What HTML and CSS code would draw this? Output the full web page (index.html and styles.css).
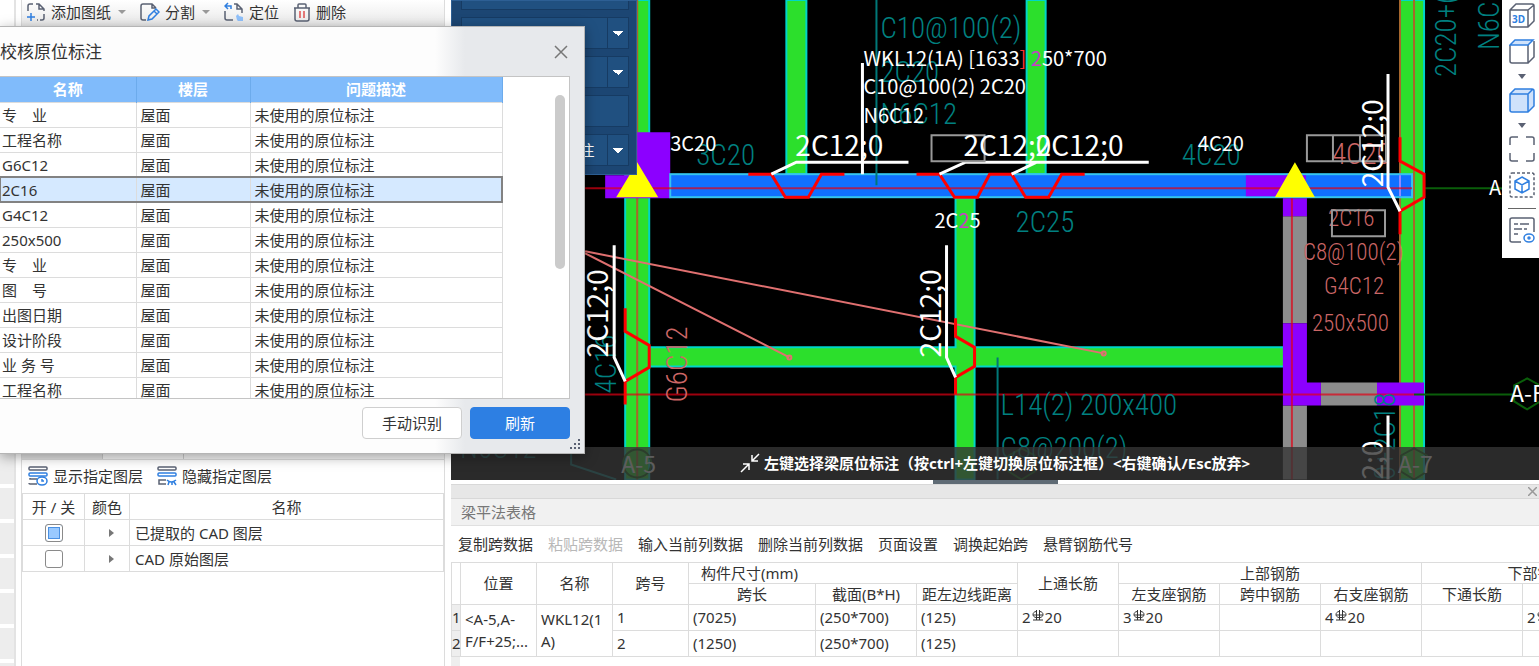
FILE: index.html
```html
<!DOCTYPE html>
<html lang="zh-CN">
<head>
    <meta charset="UTF-8">
    <meta name="viewport" content="width=device-width, initial-scale=1.0">
    <title>校核原位标注</title>
    <link rel="stylesheet" href="styles.css">
</head>
<body>
    <div class="app">
        <div class="strip">
            <div class="strip-top"></div>
            <div class="strip-cell"></div>
            <div class="strip-cell"></div>
            <div class="strip-cell"></div>
            <div class="strip-cell"></div>
            <div class="strip-cell"></div>
            <div class="strip-cell"></div>
            <div class="strip-cell"></div>
        </div>

        <aside class="side">
            <div class="side-tools">
                <button class="tool with-arrow">
                    <svg width="20" height="20" viewBox="0 0 20 20" fill="none" stroke="#5a6173" stroke-width="1.5"><path d="M2 9V4a2 2 0 0 1 2-2h3M10 2h3l5 5v2M13 2v5h5M18 12v4a2 2 0 0 1-2 2h-2M11 18h1"/><path d="M5 11v8M1 15h8" stroke="#2f7fe0"/></svg>
                    添加图纸
                </button>
                <button class="tool with-arrow">
                    <svg width="20" height="20" viewBox="0 0 20 20" fill="none" stroke="#5a6173" stroke-width="1.5"><path d="M6 18H3a2 2 0 0 1-2-2V4a2 2 0 0 1 2-2h9l4 4M12 2v4h4"/><path d="M8 18l1-4 7-7 3 3-7 7zM14 9l3 3" stroke="#2f7fe0"/></svg>
                    分割
                </button>
                <button class="tool">
                    <svg width="20" height="20" viewBox="0 0 20 20" fill="none" stroke="#5a6173" stroke-width="1.5"><path d="M1 9v7a2 2 0 0 0 2 2h6M10 2h3l5 5v4M13 2v5h5"/><path d="M7 7V4H2M4 1L1 4l3 3" stroke="#2f7fe0"/><path d="M13 18l-1-4 2-2 1 2 4 1v4h-5z" fill="#8fc0fa" stroke="none"/></svg>
                    定位
                </button>
                <button class="tool">
                    <svg width="18" height="20" viewBox="0 0 18 20" fill="none" stroke="#5a6173" stroke-width="1.5"><path d="M1 6h16M5 6V3a1 1 0 0 1 1-1h6a1 1 0 0 1 1 1v3M2 6v11a2 2 0 0 0 2 2h10a2 2 0 0 0 2-2V6"/><path d="M7 9v7M11 9v7" stroke="#e05050"/></svg>
                    删除
                </button>
            </div>

            <div class="layers">
                <div class="layer-tabs"><span class="on"></span><span></span></div>
                <div class="layer-tools">
                    <button class="tool">
                        <svg width="20" height="20" viewBox="0 0 20 20" fill="none" stroke="#5a6173" stroke-width="1.5"><rect x="1" y="1" width="18" height="3" rx="1"/><path d="M9 13H2v-1M9 18H2a1 1 0 0 1-1-1"/><rect x="1" y="7" width="18" height="3" rx="1" stroke="#2f7fe0"/><ellipse cx="14" cy="15" rx="5" ry="4" stroke="#2f7fe0"/><path d="M14 13v2h2" stroke="#2f7fe0"/></svg>
                        显示指定图层
                    </button>
                    <button class="tool">
                        <svg width="20" height="20" viewBox="0 0 20 20" fill="none" stroke="#5a6173" stroke-width="1.5"><rect x="1" y="1" width="18" height="3" rx="1"/><path d="M9 14H2v4h7"/><rect x="1" y="7" width="18" height="3" rx="1" stroke="#2f7fe0"/><path d="M10 14q4 4 9 0M11 19l1-3M15 19v-3M19 19l-2-3" stroke="#2f7fe0"/></svg>
                        隐藏指定图层
                    </button>
                </div>
                <table class="layer-table">
                    <colgroup><col class="c-on"><col class="c-color"><col></colgroup>
                    <thead>
                        <tr><th>开 / 关</th><th>颜色</th><th>名称</th></tr>
                    </thead>
                    <tbody>
                        <tr>
                            <td class="mid"><input type="checkbox" id="layer1" checked></td>
                            <td class="mid"><span class="expand"></span></td>
                            <td><label for="layer1">已提取的 CAD 图层</label></td>
                        </tr>
                        <tr>
                            <td class="mid"><input type="checkbox" id="layer2"></td>
                            <td class="mid"><span class="expand"></span></td>
                            <td><label for="layer2">CAD 原始图层</label></td>
                        </tr>
                    </tbody>
                </table>
            </div>
        </aside>

        <main class="work">
            <section class="cad">
                <svg class="drawing" viewBox="451 0 1088 479" preserveAspectRatio="xMinYMin slice">
                    <!-- green beams -->
                    <g class="beam">
                        <path d="M625 0h24v479h-24zM786 0h20v174h-20zM1026 0h19v174h-19z"/>
                        <path d="M1399 0h24v479h-24z"/>
                        <path d="M649 347H955V198h19V347H1283V366H974V479H955V366H649z"/>
                    </g>
                    <path class="axis-v" d="M637 0V479M1413 0V479M1399 0V479"/>

                    <!-- columns and walls -->
                    <path class="wall" d="M1282 216h24v107h-24zM1282 405h24v74h-24zM1320 382h56v23h-56z"/>
                    <path class="column" d="M637 132h33v66h-65v-23h32zM1282 198h24v18h-24zM1282 323h24v59h14v23h-38zM1376 382h47v23h-47z"/>

                    <!-- selected beam -->
                    <rect class="selected" x="670" y="174" width="741" height="23"/>
                    <path class="column" d="M1245 175h60v21h-60z"/>
                    <path class="edge" d="M1399 175v21"/>

                    <!-- axis lines -->
                    <path class="axis" d="M585 188H1411M1291 198V479M585 394H1413"/>
                    <path class="axis-g" d="M1423 188H1502M1413 394H1512"/>
                    <path class="yellow" d="M637 162l21 35h-42zM1294 162l20 35h-40z"/>
                    <path class="hexagon" d="M1526 378l13 7v16l-13 8-13-8v-16zM1413 448l13 7v16l-13 8-13-8v-16zM1021 448l13 7v16l-13 8-13-8v-16z"/>
                    <circle class="hexagon" cx="637" cy="463" r="14"/>

                    <!-- original CAD texts -->
                    <path class="teal-line" d="M876 0V185M997 357V479M571 440V464L616 479"/>
                    <g class="cad-text teal">
                        <text x="880" y="38">C10@100(2)</text>
                        <text x="880" y="82">2C20</text>
                        <text x="880" y="124">N6C12</text>
                        <text x="696" y="165">3C20</text>
                        <text x="1181" y="165">4C20</text>
                        <text x="1015" y="232">2C25</text>
                        <text x="1000" y="415">L14(2) 200x400</text>
                        <text x="1000" y="458">C8@200(2)</text>
                        <text x="1000" y="500">2C18;2C20</text>
                        <text x="460" y="458">N6C12</text>
                        <text transform="translate(1455 77) rotate(-90)">2C20+(2C12)</text>
                        <text transform="translate(1498 50) rotate(-90)">N6C12</text>
                        <text transform="translate(616 393) rotate(-90)">4C16</text>
                        <text transform="translate(1394 524) rotate(-90)">2C20+2C18</text>
                    </g>
                    <g class="cad-text salmon">
                        <text transform="translate(687 402) rotate(-90)">G6C12</text>
                        <text x="1331" y="164">4C20</text>
                    </g>
                    <g class="cad-text salmon small">
                        <text x="1327" y="226">2C16</text>
                        <text x="1302" y="260">C8@100(2)</text>
                        <text x="1323" y="294">G4C12</text>
                        <text x="1311" y="331">250x500</text>
                    </g>
                    <path class="salmon-line" d="M585 251L1103 353M585 253L789 357"/>
                    <circle class="salmon-line" cx="789" cy="357" r="2"/>
                    <circle class="salmon-line" cx="1103" cy="353" r="2"/>

                    <!-- hanging bars -->
                    <g class="tie">
                        <path d="M748 174H771L785 197H808L821 174H844"/>
                        <path d="M916 174H939L954 197H977L989 174H1011L1025 197H1048L1061 174H1084"/>
                        <path d="M625 308V331L649 345V367L625 381V404"/>
                        <path d="M955 318V336L974 347V366L955 377V394"/>
                        <path d="M1399 137V161L1423 174V197L1399 211V234"/>
                    </g>

                    <!-- leaders -->
                    <g class="leader">
                        <path d="M771 174L796 162H908M939 174L965 162H1148M1011 174L1036 162M862 63V174"/>
                        <path d="M614 245V357L625 381M946 245V357L955 377M1387 74V187L1399 211M1387 415V479"/>
                    </g>
                    <path class="box" d="M931 135h53v26h-53zM1306 135h53v26h-53zM1332 135h53v26h-53zM1331 210h53v26h-53z"/>

                    <!-- live labels -->
                    <g class="label">
                        <text x="863" y="66">WKL12(1A) [1633<tspan class="red">]</tspan> <tspan class="magenta">2</tspan>50*700</text>
                        <text x="863" y="94">C10@100(2) 2C20</text>
                        <text x="863" y="123">N6C12</text>
                        <text x="670" y="151">3C20</text>
                        <text x="1197" y="151">4C20</text>
                        <text x="934" y="228">2C<tspan class="magenta">2</tspan>5</text>
                        <text x="1488" y="195">A-G</text>
                    </g>
                    <g class="label big">
                        <text x="795" y="156">2C12;0</text>
                        <text x="963" y="156">2C12;0</text>
                        <text x="1035" y="156">2C12;0</text>
                        <text transform="translate(608 357) rotate(-90)">2C12;0</text>
                        <text transform="translate(940 357) rotate(-90)">2C12;0</text>
                        <text transform="translate(1382 187) rotate(-90)">2C12;0</text>
                        <text transform="translate(1382 528) rotate(-90)">2C12;0</text>
                    </g>
                    <g class="label axis-name">
                        <text x="1509" y="402">A-F</text>
                        <text x="621" y="472">A-5</text>
                        <text x="1397" y="472">A-7</text>
                    </g>
                </svg>

                <div class="menu">
                    <button class="menu-item"></button>
                    <button class="menu-item split"><span>点选识别梁</span></button>
                    <button class="menu-item split"><span></span></button>
                    <button class="menu-item"></button>
                    <button class="menu-item split"><span>点选识别原位标注</span></button>
                </div>

                <div class="hint">
                    <svg width="20" height="20" viewBox="0 0 20 20" fill="none" stroke="#fff" stroke-width="1.5"><path d="M19 1l-7 7M12 2v6h6M1 19l8-8M3 11h6v6"/></svg>
                    <span>左键选择梁原位标注（按ctrl+左键切换原位标注框）&lt;右键确认/Esc放弃&gt;</span>
                </div>

                <div class="views">
                    <button aria-label="3D"><svg width="26" height="26" viewBox="0 0 26 26" fill="none" stroke="#5a6173" stroke-width="1.5"><path d="M1 8l6-6h16a2 2 0 0 1 2 2v15l-6 6H3a2 2 0 0 1-2-2zM1 8h18v17M19 8l6-5"/><text x="3" y="21" class="label-3d">3D</text></svg></button>
                    <button aria-label="俯视"><svg width="26" height="26" viewBox="0 0 26 26" fill="none" stroke="#5a6173" stroke-width="1.5"><path d="M1 7v16a2 2 0 0 0 2 2h16V7M19 25l6-6V3"/><path d="M1 7l5-5h18l-5 5z" fill="#cfe2fb" stroke="#2f7fe0"/></svg></button>
                    <span class="drop"></span>
                    <button aria-label="实体"><svg width="26" height="26" viewBox="0 0 26 26" fill="#cfe2fb" stroke="#2f7fe0" stroke-width="1.5"><path d="M1 7l5-5h17a2 2 0 0 1 2 2v15l-6 6H3a2 2 0 0 1-2-2zM1 7h18v18M19 7l5-5"/></svg></button>
                    <span class="drop"></span>
                    <button aria-label="全屏"><svg width="26" height="26" viewBox="0 0 26 26" fill="none" stroke="#5a6173" stroke-width="1.5"><path d="M1 9V3a2 2 0 0 1 2-2h6M17 1h6a2 2 0 0 1 2 2v6M25 17v6a2 2 0 0 1-2 2h-6M9 25H3a2 2 0 0 1-2-2v-6"/></svg></button>
                    <button aria-label="动态观察"><svg width="26" height="26" viewBox="0 0 26 26" fill="none" stroke="#2f7fe0" stroke-width="1.5"><rect x="1" y="1" width="24" height="24" rx="2" stroke="#5a6173" stroke-dasharray="3 2"/><path d="M13 5l7 4v8l-7 4-7-4V9zM6 9l7 4 7-4M13 13v8"/></svg></button>
                    <hr>
                    <button aria-label="显示设置"><svg width="26" height="26" viewBox="0 0 26 26" fill="none" stroke="#5a6173" stroke-width="1.5"><path d="M12 25H3a2 2 0 0 1-2-2V3a2 2 0 0 1 2-2h20a2 2 0 0 1 2 2v12M5 7h4M11 7h9M5 12h8M15 12h3M5 17h4"/><ellipse cx="20" cy="21" rx="5" ry="4" stroke="#2f7fe0"/><circle cx="20" cy="21" r="1" stroke="#2f7fe0"/></svg></button>
                </div>
            </section>

            <div class="splitter"><button class="handle" aria-label="收起"></button></div>

            <section class="beam-panel">
                <div class="panel-bar"><button class="panel-close" aria-label="关闭"><svg width="9" height="9" viewBox="0 0 9 9" stroke="#999" stroke-width="1.5"><path d="M0 0l9 9M9 0L0 9"/></svg></button></div>
                <div class="panel-title">梁平法表格</div>
                <div class="panel-tools">
                    <button>复制跨数据</button>
                    <button disabled>粘贴跨数据</button>
                    <button>输入当前列数据</button>
                    <button>删除当前列数据</button>
                    <button>页面设置</button>
                    <button>调换起始跨</button>
                    <button>悬臂钢筋代号</button>
                </div>
                <div class="beam-scroll">
                    <table class="beam-table">
                        <colgroup>
                            <col class="w-no"><col class="w-s"><col class="w-s"><col class="w-s">
                            <col class="w-l"><col class="w-m"><col class="w-m"><col class="w-m">
                            <col class="w-m"><col class="w-m"><col class="w-m"><col class="w-m"><col class="w-end">
                        </colgroup>
                        <thead>
                            <tr>
                                <th rowspan="2"></th>
                                <th rowspan="2">位置</th>
                                <th rowspan="2">名称</th>
                                <th rowspan="2">跨号</th>
                                <th colspan="3" class="start">构件尺寸(mm)</th>
                                <th rowspan="2">上通长筋</th>
                                <th colspan="3">上部钢筋</th>
                                <th colspan="2">下部钢筋</th>
                            </tr>
                            <tr>
                                <th>跨长</th><th>截面(B*H)</th><th>距左边线距离</th>
                                <th>左支座钢筋</th><th>跨中钢筋</th><th>右支座钢筋</th>
                                <th>下通长筋</th><th>下部钢筋</th>
                            </tr>
                        </thead>
                        <tbody>
                            <tr>
                                <td class="no">1</td>
                                <td rowspan="2" class="wrap">&lt;A-5,A-<br>F/F+25;...</td>
                                <td rowspan="2" class="wrap">WKL12(1<br>A)</td>
                                <td>1</td><td>(7025)</td><td>(250*700)</td><td>(125)</td>
                                <td>2<svg class="bar-mark" viewBox="0 0 12 12"><use href="#rebar"/></svg>20</td>
                                <td>3<svg class="bar-mark" viewBox="0 0 12 12"><use href="#rebar"/></svg>20</td>
                                <td></td>
                                <td>4<svg class="bar-mark" viewBox="0 0 12 12"><use href="#rebar"/></svg>20</td>
                                <td></td>
                                <td>2<svg class="bar-mark" viewBox="0 0 12 12"><use href="#rebar"/></svg>25</td>
                            </tr>
                            <tr>
                                <td class="no">2</td>
                                <td>2</td><td>(1250)</td><td>(250*700)</td><td>(125)</td>
                                <td></td><td></td><td></td><td></td><td></td><td></td>
                            </tr>
                        </tbody>
                    </table>
                    <div class="no-fill"></div>
                </div>
            </section>
        </main>
    </div>

    <div class="dialog" role="dialog" aria-labelledby="dialog-title">
        <div class="dialog-head">
            <h1 id="dialog-title">校核原位标注</h1>
            <button class="close" aria-label="关闭"><svg width="14" height="14" viewBox="0 0 14 14" stroke="#777" stroke-width="1.5"><path d="M1 1l12 12M13 1L1 13"/></svg></button>
        </div>
        <div class="list">
            <table class="check-table">
                <colgroup><col class="c-name"><col class="c-floor"><col class="c-desc"></colgroup>
                <thead>
                    <tr><th>名称</th><th>楼层</th><th>问题描述</th></tr>
                </thead>
                <tbody>
                    <tr><td>专&emsp;业</td><td>屋面</td><td>未使用的原位标注</td></tr>
                    <tr><td>工程名称</td><td>屋面</td><td>未使用的原位标注</td></tr>
                    <tr><td>G6C12</td><td>屋面</td><td>未使用的原位标注</td></tr>
                    <tr class="current"><td>2C16</td><td>屋面</td><td>未使用的原位标注</td></tr>
                    <tr><td>G4C12</td><td>屋面</td><td>未使用的原位标注</td></tr>
                    <tr><td>250x500</td><td>屋面</td><td>未使用的原位标注</td></tr>
                    <tr><td>专&emsp;业</td><td>屋面</td><td>未使用的原位标注</td></tr>
                    <tr><td>图&emsp;号</td><td>屋面</td><td>未使用的原位标注</td></tr>
                    <tr><td>出图日期</td><td>屋面</td><td>未使用的原位标注</td></tr>
                    <tr><td>设计阶段</td><td>屋面</td><td>未使用的原位标注</td></tr>
                    <tr><td>业 务 号</td><td>屋面</td><td>未使用的原位标注</td></tr>
                    <tr><td>工程名称</td><td>屋面</td><td>未使用的原位标注</td></tr>
                </tbody>
            </table>
            <div class="scroll"><span></span></div>
        </div>
        <div class="dialog-foot">
            <button class="btn">手动识别</button>
            <button class="btn primary">刷新</button>
        </div>
        <svg class="grip" width="11" height="11" viewBox="0 0 11 11" fill="#5a6173"><path d="M8 0h2v2h-2zM4 4h2v2h-2zM8 4h2v2h-2zM0 8h2v2h-2zM4 8h2v2h-2zM8 8h2v2h-2z"/></svg>
    </div>

    <svg width="0" height="0" class="defs">
        <symbol id="rebar" viewBox="0 0 12 12"><path d="M4.500 0v10M7.500 0v10M1 10h10M1 5h10M4 1.500C0 2 0 7 4 7.500h4C12 7 12 2 8 1.500" fill="none" stroke="#333"/></symbol>
    </svg>
</body>
</html>
```
FILE: styles.css
```css
* {
    box-sizing: border-box;
}
body {
    margin: 0;
    height: 100vh;
    overflow: hidden;
    background: #fff;
    color: #333;
    font: 15px/20px "Noto Sans", "Noto Sans CJK SC", sans-serif;
}
button {
    padding: 0;
    border: none;
    background: none;
    color: inherit;
    font: inherit;
    white-space: nowrap;
}
table {
    border-collapse: collapse;
    table-layout: fixed;
}
.defs {
    position: absolute;
}
.app {
    display: flex;
    height: 100%;
}

/* left edge */
.strip {
    flex: 0 0 16px;
    display: flex;
    flex-direction: column;
    gap: 4px;
    border-right: 2px solid #e3e3e3;
    overflow: hidden;
}
.strip-top {
    flex: 0 0 449px;
}
.strip-cell {
    flex: 0 0 31px;
    background: #ededed;
}

/* layer panel */
.side {
    flex: 0 0 424px;
    margin-left: 5px;
    display: flex;
    flex-direction: column;
    border: solid #dcdcdc;
    border-width: 0 1px;
}
.side-tools {
    height: 40px;
    display: flex;
    align-items: flex-start;
    gap: 14px;
    padding: 2px 4px;
    background: linear-gradient(#fff, #e8e8e8 26px);
}
.tool {
    display: flex;
    align-items: center;
    gap: 5px;
    height: 20px;
}
.with-arrow::after {
    content: "";
    margin-left: 2px;
    border: 4px solid transparent;
    border-top-color: #999;
    border-bottom: none;
}
.layers {
    margin-top: 414px;
}
.layer-tabs {
    display: flex;
    height: 6px;
    border-bottom: 1px solid #dcdcdc;
    background: #f5f5f5;
}
.layer-tabs span {
    width: 81px;
    border-right: 1px solid #ccc;
}
.layer-tabs .on {
    background: #e2e2e2;
}
.layer-tools {
    display: flex;
    align-items: center;
    gap: 14px;
    height: 33px;
    padding: 0 6px 2px;
}
.layer-table {
    width: 100%;
}
.layer-table th,
.layer-table td {
    height: 26px;
    padding: 0 5px;
    border: 1px solid #dcdcdc;
    font-weight: normal;
}
.layer-table .mid {
    text-align: center;
}
.c-on {
    width: 62px;
}
.c-color {
    width: 45px;
}
.layer-table input {
    appearance: none;
    display: block;
    width: 18px;
    height: 18px;
    margin: 0 auto;
    padding: 2px;
    border: 1px solid #8a8a8a;
    border-radius: 3px;
}
.layer-table input:checked {
    background: #99c9ff content-box;
    box-shadow: inset 0 0 0 2px #fff, inset 0 0 0 3px #4a90e2;
}
.expand {
    display: inline-block;
    margin-left: 8px;
    border: 4px solid transparent;
    border-left: 5px solid #777;
    border-right: none;
    vertical-align: 2px;
}

/* work area */
.work {
    flex: 1;
    min-width: 0;
    margin-left: 6px;
    display: flex;
    flex-direction: column;
}
.cad {
    position: relative;
    height: 72vh;
    background: #000;
    overflow: hidden;
}
.drawing {
    display: block;
    width: 100%;
    height: 100%;
    fill: none;
}
.beam {
    fill: #2cdf2c;
    stroke: #00d5c8;
    stroke-width: 2;
}
.axis-v {
    stroke: #a8662c;
    stroke-width: 2;
}
.wall {
    fill: #8c8c8c;
}
.column {
    fill: #8c00ff;
}
.selected {
    fill: #1070ff;
    stroke: #35c5ee;
    stroke-width: 2;
}
.edge {
    stroke: #8f8bff;
    stroke-width: 2;
}
.axis {
    stroke: rgba(225, 0, 20, 0.7);
    stroke-width: 2;
}
.axis-g,
.hexagon {
    stroke: #0a5e0a;
    stroke-width: 2;
}
.yellow {
    fill: #ff0;
}
.cad-text {
    font: 300 29px "Roboto Condensed", "Liberation Sans Narrow", sans-serif;
}
.cad-text.small {
    font-size: 23px;
}
.teal {
    fill: #008080;
}
.salmon {
    fill: #cc6666;
}
.teal-line {
    stroke: #007878;
    stroke-width: 2;
}
.salmon-line {
    stroke: #e07070;
    stroke-width: 2;
}
.tie {
    stroke: #f00;
    stroke-width: 3;
}
.leader {
    stroke: #fff;
    stroke-width: 3;
}
.box {
    stroke: #999;
    stroke-width: 2;
}
.label {
    fill: #fff;
    font: 20px "Noto Sans CJK SC", sans-serif;
}
.label.big {
    font-size: 28px;
}
.label.axis-name {
    font-size: 23px;
}
.magenta {
    fill: #c83cc8;
}
.red {
    fill: #f33;
}

.menu {
    position: absolute;
    left: 0;
    top: 0;
    width: 186px;
    height: 175px;
    display: flex;
    flex-direction: column;
    justify-content: flex-end;
    gap: 7px;
    padding: 8px 7px 8px 9px;
    border: 1px solid #2d5f94;
    background: #1c4673;
    overflow: hidden;
}
.menu-item {
    flex: 0 0 32px;
    border: 1px solid #163b63;
    background: #205080;
    color: #fff;
}
.menu-item.split {
    display: flex;
    align-items: center;
}
.split span {
    flex: 1;
}
.split::after {
    content: "";
    width: 20px;
    height: 30px;
    border-left: 1px solid #163b63;
    background: conic-gradient(from -45deg at 50% 100%, #fff 90deg, transparent 0) 50% 50% / 10px 5px no-repeat;
}
.hint {
    position: absolute;
    left: 0;
    right: 0;
    bottom: 0;
    height: 33px;
    display: flex;
    align-items: center;
    justify-content: center;
    gap: 4px;
    background: rgba(52, 52, 52, 0.8);
    color: #fff;
    font-weight: bold;
}
.views {
    position: absolute;
    right: 0;
    top: 0;
    width: 37px;
    height: 258px;
    display: flex;
    flex-direction: column;
    align-items: center;
    padding: 2px 3px 2px 6px;
    background: #fff;
}
.views button {
    height: 26px;
    margin-bottom: 10px;
}
.views svg {
    display: block;
}
.drop {
    margin-bottom: 8px;
    border: 4px solid transparent;
    border-top: 5px solid #5a6173;
    border-bottom: none;
}
.views hr {
    width: 100%;
    margin: 0 0 8px;
    border: none;
    border-top: 1px solid #666;
}
.label-3d {
    fill: #2f7fe0;
    stroke: none;
    font: bold 10px "Noto Sans", sans-serif;
}
.splitter {
    flex: 0 0 4px;
    display: flex;
    justify-content: center;
}
.handle {
    width: 125px;
    background: #5f6b75;
}

/* beam table panel */
.beam-panel {
    flex: 1;
    display: flex;
    flex-direction: column;
    overflow: hidden;
}
.panel-bar {
    flex: 0 0 15px;
    display: flex;
    justify-content: flex-end;
    align-items: center;
    padding-right: 2px;
    border: solid #d8d8d8;
    border-width: 1px 0;
    background: #e7e7e7;
}
.panel-close svg {
    display: block;
}
.panel-title {
    flex: 0 0 27px;
    padding: 3px 10px;
    border-bottom: 1px solid #e0e0e0;
    background: #f1f1f1;
    color: #777;
}
.panel-tools {
    flex: 0 0 36px;
    display: flex;
    align-items: center;
    gap: 15px;
    padding: 0 7px;
}
.panel-tools button:disabled {
    color: #b8b8b8;
}
.beam-scroll {
    flex: 1;
    display: flex;
    flex-direction: column;
    overflow: hidden;
}
.beam-table {
    width: 1203px;
}
.w-no {
    width: 9px;
}
.w-s {
    width: 76px;
}
.w-m {
    width: 101px;
}
.w-l {
    width: 127px;
}
.w-end {
    width: 131px;
}
.beam-table th,
.beam-table td {
    padding: 0 4px;
    border: 1px solid #dcdcdc;
    text-align: left;
    font-weight: normal;
    white-space: nowrap;
}
.beam-table th {
    height: 21px;
    padding: 0;
    text-align: center;
}
.beam-table th.start {
    padding-left: 12px;
    text-align: left;
}
.beam-table td {
    height: 26px;
}
.beam-table .wrap {
    line-height: 22px;
}
.beam-table .no {
    padding: 0;
    background: #eee;
}
.bar-mark {
    width: 12px;
    height: 12px;
    margin: 0 1px;
    vertical-align: 1px;
}
.no-fill {
    flex: 1;
    width: 9px;
    background: #eee;
}

/* dialog */
.dialog {
    position: absolute;
    left: 0;
    top: 26px;
    width: 585px;
    display: flex;
    flex-direction: column;
    border: 1px solid #b5b5b5;
    border-left: none;
    background: linear-gradient(to right, #fdfdfd 435px, #e7e9ec 465px);
    box-shadow: 0 3px 12px rgba(0, 0, 0, 0.35);
}
.dialog-head {
    height: 49px;
    display: flex;
    align-items: center;
    justify-content: space-between;
    padding-right: 16px;
}
.dialog-head h1 {
    margin: 0;
    font-size: 17px;
    font-weight: normal;
}
.close svg {
    display: block;
}
.list {
    height: 323px;
    margin-right: 14px;
    display: flex;
    justify-content: space-between;
    border: 1px solid #c4c4c4;
    border-left: none;
    background: #fff;
    overflow: hidden;
}
.check-table {
    flex: none;
    width: 502px;
    height: 325px;
}
.c-name {
    width: 136px;
}
.c-floor {
    width: 114px;
}
.c-desc {
    width: 252px;
}
.check-table th {
    height: 25px;
    padding: 0;
    border-right: 1px solid #6cabec;
    background: #80bbfb;
    color: #fff;
}
.check-table td {
    height: 25px;
    padding: 0 4px;
    border: 1px solid #dcdcdc;
}
.check-table td:first-child {
    padding-left: 2px;
    border-left: none;
}
.current {
    background: #d5e9ff;
    outline: 2px solid #828282;
    outline-offset: -1px;
}
.scroll {
    width: 14px;
    padding-top: 18px;
}
.scroll span {
    display: block;
    width: 10px;
    height: 174px;
    border-radius: 5px;
    background: #cbcbcb;
}
.dialog-foot {
    display: flex;
    justify-content: flex-end;
    gap: 8px;
    padding: 8px 14px 14px;
}
.btn {
    width: 100px;
    height: 32px;
    border: 1px solid #cfcfcf;
    border-radius: 4px;
    background: #fff;
}
.btn.primary {
    border-color: #2d7fe3;
    background: #2d7fe3;
    color: #fff;
}
.grip {
    position: absolute;
    right: 3px;
    bottom: 3px;
}
```
